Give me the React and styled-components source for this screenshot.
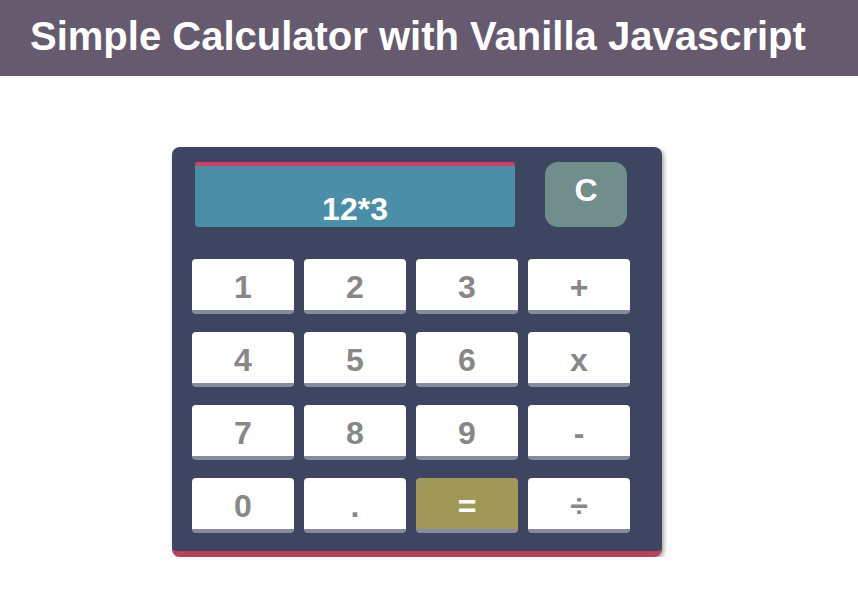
import React from "react";
import styled, { createGlobalStyle } from "styled-components";

const Global = createGlobalStyle`
  html, body { margin: 0; padding: 0; background: #ffffff; }
  body { font-family: "Liberation Sans", Arial, sans-serif; }
`;

const Header = styled.header`
  height: 76px;
  background: #665a6e;
  display: flex;
  align-items: center;
  padding-left: 30px;
`;

const Title = styled.h1`
  margin: 0;
  color: #ffffff;
  font-size: 40px;
  font-weight: 700;
  line-height: 46px;
  margin-top: -5px;
`;

const Stage = styled.main`
  display: flex;
  padding: 71px 0 0 172px;
`;

const Calculator = styled.div`
  width: 490px;
  box-sizing: border-box;
  padding: 15px 32px 18px 20px;
  background: #3e4560;
  border-bottom: 6px solid #b9405f;
  border-radius: 8px;
  box-shadow: 2px 2px 4px rgba(0, 0, 0, 0.35);
  font-family: "Liberation Sans", Arial, sans-serif;
`;

const TopRow = styled.div`
  display: flex;
  gap: 30px;
  padding-left: 3px;
  height: 65px;
`;

const Display = styled.div`
  width: 320px;
  box-sizing: border-box;
  background: #4a8ea7;
  border-top: 4px solid #d63d66;
  border-radius: 3px;
  display: flex;
  align-items: flex-end;
  justify-content: center;
  padding-bottom: 2px;
  color: #ffffff;
  font-size: 32px;
  font-weight: 700;
  line-height: 32px;
`;

const ClearButton = styled.div`
  width: 82px;
  box-sizing: border-box;
  background: #718e8c;
  border-radius: 13px;
  display: flex;
  justify-content: center;
  padding-top: 12px;
  color: #ffffff;
  font-size: 32px;
  font-weight: 700;
  line-height: 32px;
`;

const Keypad = styled.div`
  margin-top: 32px;
  display: grid;
  grid-template-columns: repeat(4, 102px);
  column-gap: 10px;
  row-gap: 18px;
`;

const Key = styled.div`
  height: 55px;
  box-sizing: border-box;
  background: ${(p) => (p.$accent ? "#a09858" : "#ffffff")};
  color: ${(p) => (p.$accent ? "#ffffff" : "#888888")};
  border-bottom: 4px solid #868b9f;
  border-radius: 4px;
  display: flex;
  justify-content: center;
  padding-top: 12px;
  font-size: 32px;
  font-weight: 700;
  line-height: 32px;
`;

const keys = ["1", "2", "3", "+", "4", "5", "6", "x", "7", "8", "9", "-", "0", ".", "=", "÷"];

export default function App() {
  return (
    <>
      <Global />
      <Header>
        <Title>Simple Calculator with Vanilla Javascript</Title>
      </Header>
      <Stage>
        <Calculator>
          <TopRow>
            <Display>12*3</Display>
            <ClearButton>C</ClearButton>
          </TopRow>
          <Keypad>
            {keys.map((k) => (
              <Key key={k} $accent={k === "="}>
                {k}
              </Key>
            ))}
          </Keypad>
        </Calculator>
      </Stage>
    </>
  );
}
